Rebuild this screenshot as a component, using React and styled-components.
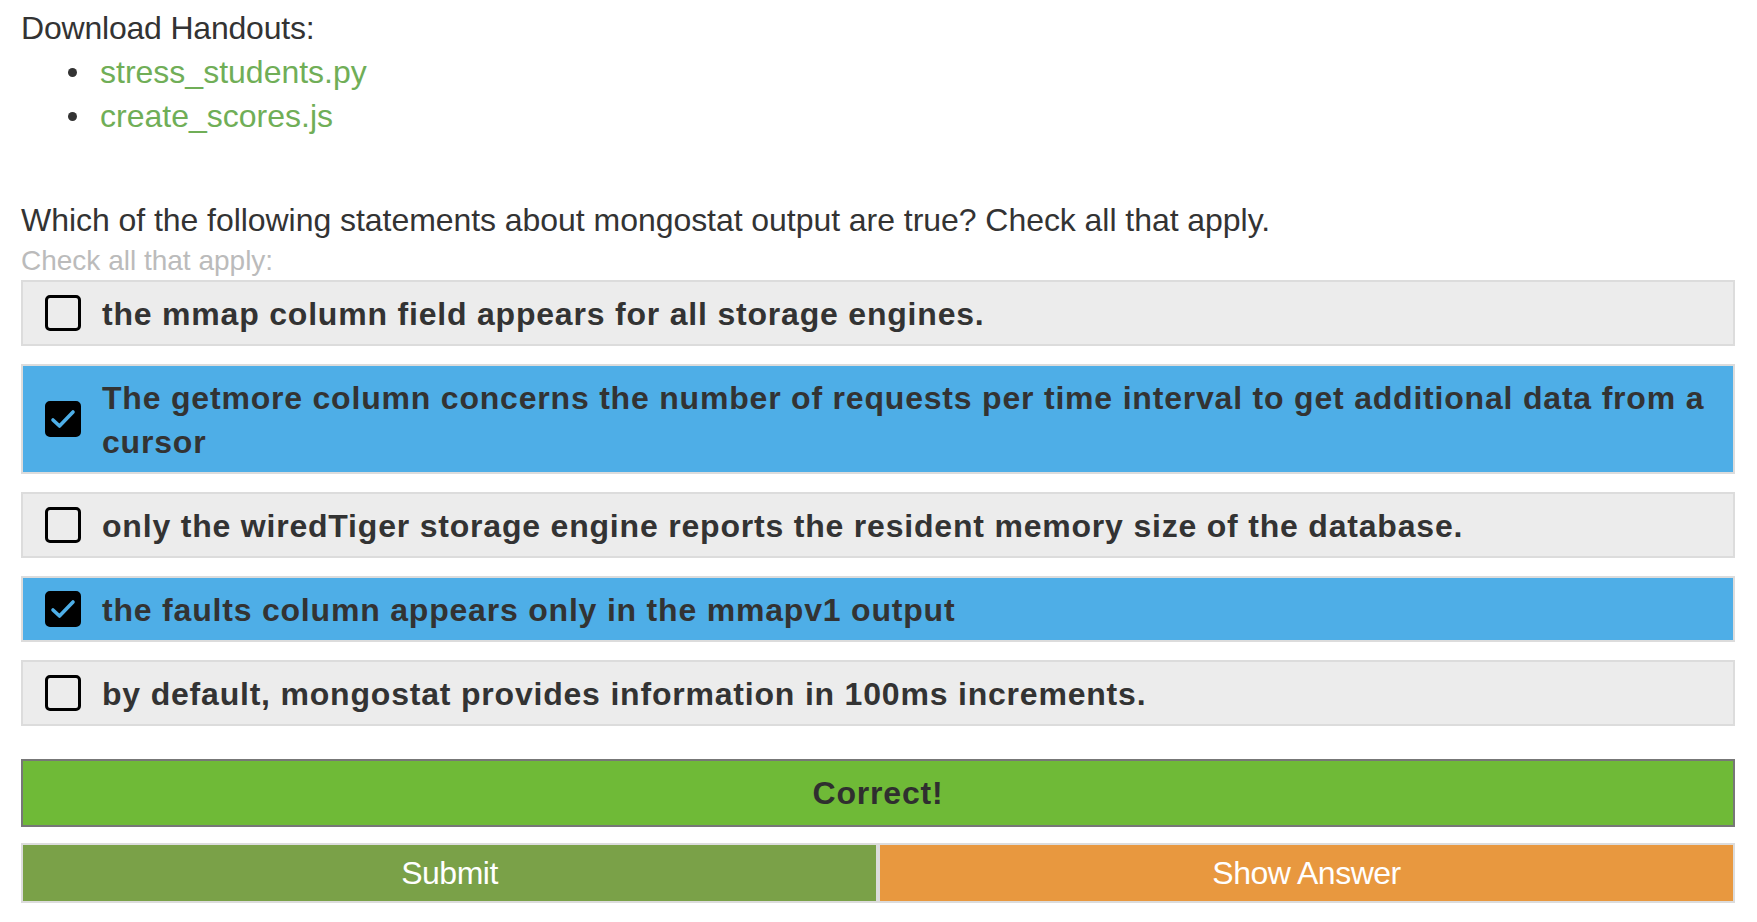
import React, { useState } from 'react';
import styled, { createGlobalStyle } from 'styled-components';

const GlobalStyles = createGlobalStyle`
  body {
    margin: 0;
    background: #fff;
    font-family: "Liberation Sans", Arial, sans-serif;
    color: #333;
  }
`;

const Page = styled.div`
  padding: 6px 22px 20px 21px;
  font-size: 32px;
  line-height: 44px;
`;

const Label = styled.div`
  color: #333;
  letter-spacing: -0.2px;
`;

const Handouts = styled.ul`
  list-style: none;
  margin: 0;
  padding: 0 0 0 47px;
`;

const Handout = styled.li`
  display: flex;
  align-items: center;
  &::before {
    content: '';
    width: 9px;
    height: 9px;
    border-radius: 50%;
    background: #333;
    margin-right: 23px;
  }
`;

const Link = styled.a`
  color: #70ae57;
  text-decoration: none;
`;

const Question = styled.p`
  margin: 60px 0 0;
  letter-spacing: -0.05px;
`;

const Hint = styled.div`
  color: #bbb;
  font-size: 28px;
  line-height: 38px;
`;

const Options = styled.div`
  display: flex;
  flex-direction: column;
  gap: 18px;
`;

const Option = styled.label`
  display: flex;
  align-items: center;
  gap: 21px;
  padding: 10px 22px 8px;
  border: 2px solid #dcdcdc;
  background: ${p => (p.$checked ? '#4eaee7' : '#ececec')};
  font-weight: bold;
  letter-spacing: 0.8px;
  color: #333;
  cursor: pointer;
`;

const Box = styled.span`
  flex: none;
  width: 36px;
  height: 36px;
  margin-top: -2px;
  box-sizing: border-box;
  border: 3px solid #000;
  border-radius: 5px;
  background: ${p => (p.$checked ? '#000' : 'transparent')};
  display: flex;
  align-items: center;
  justify-content: center;
`;

const Result = styled.div`
  margin-top: 33px;
  height: 68px;
  box-sizing: border-box;
  border: 2px solid #777;
  background: #6fba37;
  color: #2f2f2f;
  font-weight: bold;
  letter-spacing: 0.8px;
  display: flex;
  align-items: center;
  justify-content: center;
`;

const Actions = styled.div`
  margin-top: 16px;
  display: grid;
  grid-template-columns: 1fr 1fr;
`;

const Button = styled.button`
  height: 60px;
  border: 2px solid #dcdcdc;
  background: ${p => p.$bg};
  color: #fff;
  font-family: "Liberation Sans", Arial, sans-serif;
  font-size: 32px;
  letter-spacing: -0.5px;
  cursor: pointer;
`;

const options = [
  { text: 'the mmap column field appears for all storage engines.', checked: false },
  { text: 'The getmore column concerns the number of requests per time interval to get additional data from a cursor', checked: true },
  { text: 'only the wiredTiger storage engine reports the resident memory size of the database.', checked: false },
  { text: 'the faults column appears only in the mmapv1 output', checked: true },
  { text: 'by default, mongostat provides information in 100ms increments.', checked: false },
];

const Check = () => (
  <svg width="26" height="22" viewBox="0 0 26 22">
    <path d="M3 12 L9.5 18 L23 4" fill="none" stroke="#4eaee7" strokeWidth="3.6" strokeLinecap="round" strokeLinejoin="round" />
  </svg>
);

const App = () => {
  const [state, setState] = useState(options.map(o => o.checked));

  const toggle = i => setState(s => s.map((v, j) => (j === i ? !v : v)));

  return (
    <Page>
      <GlobalStyles />
      <Label>Download Handouts:</Label>
      <Handouts>
        <Handout><Link href="#">stress_students.py</Link></Handout>
        <Handout><Link href="#">create_scores.js</Link></Handout>
      </Handouts>
      <Question>Which of the following statements about mongostat output are true? Check all that apply.</Question>
      <Hint>Check all that apply:</Hint>
      <Options>
        {options.map((o, i) => (
          <Option key={i} $checked={state[i]} onClick={() => toggle(i)}>
            <Box $checked={state[i]}>{state[i] && <Check />}</Box>
            <span>{o.text}</span>
          </Option>
        ))}
      </Options>
      <Result>Correct!</Result>
      <Actions>
        <Button $bg="#7aa148">Submit</Button>
        <Button $bg="#e8983f">Show Answer</Button>
      </Actions>
    </Page>
  );
};

export default App;
